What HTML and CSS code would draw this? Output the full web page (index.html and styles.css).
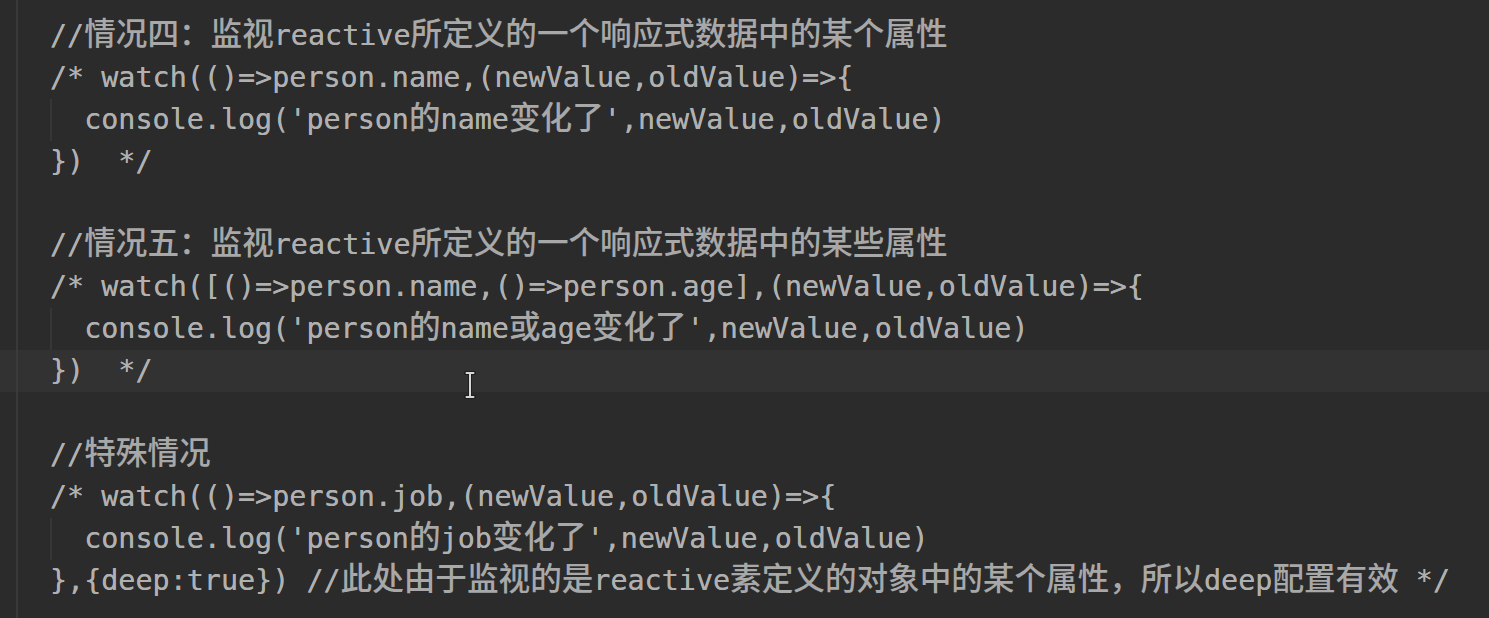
FILE: index.html
```html
<!DOCTYPE html>
<html lang="zh">
<head>
<meta charset="utf-8">
<title>watch</title>
<link rel="stylesheet" href="styles.css">
</head>
<body>
<div class="editor">
<div class="line">//<span class="c">情况四：监视</span>reactive<span class="c">所定义的一个响应式数据中的某个属性</span></div>
<div class="line">/* watch(()=&gt;person.name,(newValue,oldValue)=&gt;{</div>
<div class="line indent">  console.log('person<span class="c">的</span>name<span class="c">变化了</span>',newValue,oldValue)</div>
<div class="line">})  */</div>
<div class="line"> </div>
<div class="line">//<span class="c">情况五：监视</span>reactive<span class="c">所定义的一个响应式数据中的某些属性</span></div>
<div class="line">/* watch([()=&gt;person.name,()=&gt;person.age],(newValue,oldValue)=&gt;{</div>
<div class="line indent">  console.log('person<span class="c">的</span>name<span class="c">或</span>age<span class="c">变化了</span>',newValue,oldValue)</div>
<div class="line current">})  */</div>
<div class="line"> </div>
<div class="line">//<span class="c">特殊情况</span></div>
<div class="line">/* watch(()=&gt;person.job,(newValue,oldValue)=&gt;{</div>
<div class="line indent">  console.log('person<span class="c">的</span>job<span class="c">变化了</span>',newValue,oldValue)</div>
<div class="line">},{deep:true}) //<span class="c">此处由于监视的是</span>reactive<span class="c">素定义的对象中的某个属性，所以</span>deep<span class="c">配置有效</span> */</div>
<svg class="ibeam" width="14" height="30" viewBox="0 0 14 30">
<path d="M3 3h8M7 3v24M3 27h8" stroke="#1e1e1e" stroke-width="4" fill="none" stroke-linecap="round"/>
<path d="M3.5 3h7M7 3v24M3.5 27h7" stroke="#d8d8d8" stroke-width="2" fill="none" stroke-linecap="round"/>
</svg>
</div>
</body>
</html>
```
FILE: styles.css
```css
html, body {
  margin: 0;
  padding: 0;
  background: #2b2b2b;
}
.editor {
  position: relative;
  width: 1489px;
  height: 618px;
  box-sizing: border-box;
  padding-top: 15px;
  background: #2b2b2b linear-gradient(#393939, #393939) no-repeat 16px 0 / 2px 100%;
  overflow: hidden;
}
.line {
  height: 41.9px;
  line-height: 41.9px;
  padding-left: 50px;
  white-space: pre;
  font-family: "DejaVu Sans Mono", "Liberation Mono", monospace;
  font-size: 28.4px;
  color: #b0b0b0;
  text-shadow: 0 0 0.6px #b0b0b0;
}
.c {
  font-family: "Noto Sans CJK SC", sans-serif;
  font-size: 31.6px;
  line-height: 1;
  font-weight: 500;
  color: #a8a8a8;
  text-shadow: none;
}
.indent {
  background: linear-gradient(#363636, #363636) no-repeat 50px 0 / 2px 100%;
}
.current {
  background: linear-gradient(#3b3b3b, #3b3b3b) no-repeat 16px 0 / 2px 100%, #323232;
}
.ibeam {
  position: absolute;
  left: 463px;
  top: 370px;
}
```
